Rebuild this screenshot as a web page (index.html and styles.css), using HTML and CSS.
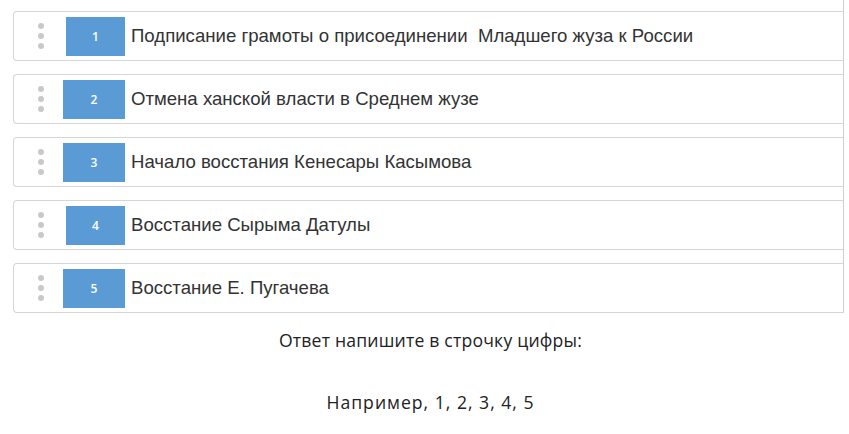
FILE: index.html
```html
<!DOCTYPE html>
<html lang="ru">
<head>
<meta charset="utf-8">
<link rel="stylesheet" href="styles.css">
</head>
<body>
<div class="page">
  <div class="list">
    <div class="row"><div class="grip"><i></i><i></i><i></i></div><div class="num n1">1</div><div class="label">Подписание грамоты о присоединении&nbsp; Младшего жуза к России</div></div>
    <div class="row"><div class="grip"><i></i><i></i><i></i></div><div class="num">2</div><div class="label">Отмена ханской власти в Среднем жузе</div></div>
    <div class="row"><div class="grip"><i></i><i></i><i></i></div><div class="num">3</div><div class="label">Начало восстания Кенесары Касымова</div></div>
    <div class="row"><div class="grip"><i></i><i></i><i></i></div><div class="num n1">4</div><div class="label">Восстание Сырыма Датулы</div></div>
    <div class="row"><div class="grip"><i></i><i></i><i></i></div><div class="num">5</div><div class="label">Восстание Е. Пугачева</div></div>
  </div>
  <p class="note first">Ответ напишите в строчку цифры:</p>
  <p class="note second">Например, 1, 2, 3, 4, 5</p>
</div>
</body>
</html>
```
FILE: styles.css
```css
html, body { margin: 0; padding: 0; background: #fff; }
.page { width: 849px; height: 434px; overflow: hidden; }
.list {
  margin-left: 13px;
  width: 830px;
  padding-top: 11px;
  border-right: 1px solid #cfcfcf;
  display: flex;
  flex-direction: column;
  gap: 13px;
}
.row {
  height: 48px;
  border: 1px solid #d6d6d6;
  border-right: none;
  border-radius: 4px 0 0 4px;
  display: flex;
  align-items: center;
  background: #fff;
}
.grip {
  width: 13px;
  margin-left: 20px;
  display: flex;
  flex-direction: column;
  align-items: center;
  gap: 4px;
}
.grip i { width: 6px; height: 6px; border-radius: 50%; background: #c9c9c9; display: block; }
.num {
  margin-left: 16px;
  width: 62px;
  height: 39px;
  background: #5b9bd5;
  color: #fff;
  font-family: "Open Sans", sans-serif;
  font-size: 12px;
  font-weight: 600;
  display: flex;
  align-items: center;
  justify-content: center;
}
.num.n1 { margin-left: 19px; width: 59px; }
.label {
  margin-left: 6px;
  font-family: "Liberation Sans", Arial, sans-serif;
  font-size: 18.6px;
  color: #333;
}
.note {
  margin: 0;
  text-align: center;
  font-family: "Open Sans", "Liberation Sans", sans-serif;
  font-size: 17.6px;
  color: #222;
  padding-left: 12px;
}
.note.first { margin-top: 15px; letter-spacing: 0.2px; }
.note.second { margin-top: 38px; letter-spacing: 1px; }
```
